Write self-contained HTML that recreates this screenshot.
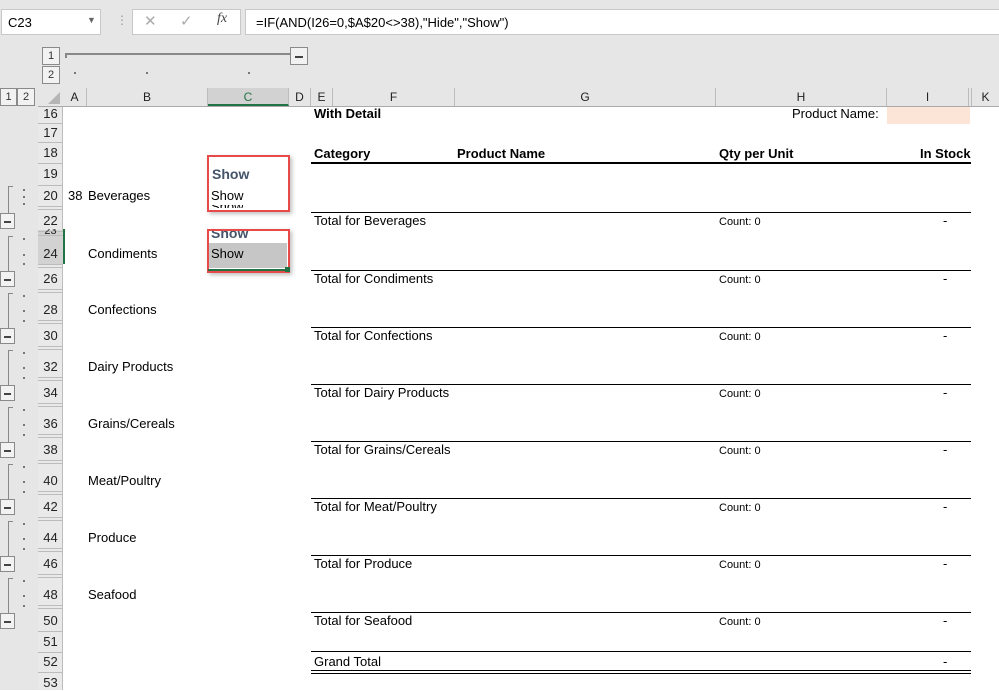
<!DOCTYPE html>
<html><head><meta charset="utf-8"><style>
*{margin:0;padding:0;box-sizing:border-box}
body{width:999px;height:690px;overflow:hidden;background:#fff;font-family:"Liberation Sans",Calibri,sans-serif;position:relative;font-size:13px;color:#000}
.a{position:absolute;white-space:nowrap}
.t{position:absolute;white-space:nowrap;line-height:16px;height:16px}
.rn{position:absolute;left:38px;width:25px;text-align:center;font-size:13px;line-height:16px;color:#222}
.hl{position:absolute;left:38px;width:25px;height:1px;background:#bcbcbc}
.ch{position:absolute;top:88px;height:18px;line-height:18px;text-align:center;font-size:12px;color:#222;border-right:1px solid #bcbcbc}
.btn{position:absolute;border:1px solid #8a8a8a;background:#f2f2f2;font-size:11px;text-align:center;color:#333}
.dot{position:absolute;width:2px;height:2px;background:#777}
.cnt{font-size:11px}
</style></head><body>
<!-- top gray area -->
<div class="a" style="left:0;top:0;width:999px;height:106px;background:#e6e6e6"></div>
<div class="a" style="left:0;top:106px;width:38px;height:584px;background:#e6e6e6"></div>
<div class="a" style="left:38px;top:106px;width:25px;height:584px;background:#e9e9e9;border-right:1px solid #bcbcbc"></div>
<!-- formula bar -->
<div class="a" style="left:1px;top:9px;width:100px;height:26px;background:#fff;border:1px solid #c8c8c8;padding:5px 6px;font-size:13px">C23</div>
<div class="a" style="left:87px;top:15px;font-size:9px;color:#666">▼</div>
<div class="a" style="left:116px;top:13px;color:#999;font-size:12px">⋮</div>
<div class="a" style="left:132px;top:9px;width:109px;height:26px;background:#fff;border:1px solid #c8c8c8"></div>
<div class="a" style="left:144px;top:12px;color:#aaa;font-size:15px">✕</div>
<div class="a" style="left:180px;top:12px;color:#aaa;font-size:15px">✓</div>
<div class="a" style="left:217px;top:11px;color:#444;font-size:14px;font-style:italic;font-family:'Liberation Serif',serif">fx</div>
<div class="a" style="left:245px;top:9px;width:760px;height:26px;background:#fff;border:1px solid #c8c8c8;padding:5px 10px;font-size:13px">=IF(AND(I26=0,$A$20&lt;&gt;38),"Hide","Show")</div>
<!-- column outline -->
<div class="btn" style="left:42px;top:47px;width:18px;height:18px;line-height:16px">1</div>
<div class="btn" style="left:42px;top:66px;width:18px;height:18px;line-height:16px">2</div>
<div class="a" style="left:65px;top:53px;width:226px;height:2px;background:#888"></div>
<div class="a" style="left:65px;top:53px;width:2px;height:5px;background:#888"></div>
<div class="btn" style="left:290px;top:47px;width:18px;height:18px"><div class="a" style="left:4px;top:8px;width:8px;height:2px;background:#444"></div></div>
<div class="dot" style="left:74px;top:72px"></div><div class="dot" style="left:146px;top:72px"></div><div class="dot" style="left:248px;top:72px"></div>
<div class="btn" style="left:0;top:88px;width:17px;height:18px;line-height:16px">1</div>
<div class="btn" style="left:17px;top:88px;width:18px;height:18px;line-height:16px">2</div>
<!-- column headers -->
<div class="a" style="left:38px;top:106px;width:961px;height:1px;background:#aaa"></div>
<div class="a" style="left:48px;top:92px;width:0;height:0;border-left:12px solid transparent;border-bottom:12px solid #b5b5b5"></div>
<div class="ch" style="left:63px;width:24px">A</div>
<div class="ch" style="left:87px;width:121px">B</div>
<div class="ch" style="left:208px;width:81px;background:#d2d2d2;border-bottom:2px solid #217346;color:#217346">C</div>
<div class="ch" style="left:289px;width:22px">D</div>
<div class="ch" style="left:311px;width:22px">E</div>
<div class="ch" style="left:333px;width:122px">F</div>
<div class="ch" style="left:455px;width:261px">G</div>
<div class="ch" style="left:716px;width:171px">H</div>
<div class="ch" style="left:887px;width:82px">I</div>
<div class="ch" style="left:969px;width:3px"></div>
<div class="ch" style="left:972px;width:27px;border-right:0">K</div>
<!-- fixed rows -->
<div class="rn" style="top:106px">16</div><div class="hl" style="top:123px"></div>
<div class="rn" style="top:125px">17</div><div class="hl" style="top:142px"></div>
<div class="rn" style="top:145px">18</div><div class="hl" style="top:163px"></div>
<div class="rn" style="top:166px">19</div><div class="hl" style="top:185px"></div>
<div class="t" style="left:314px;top:106px;font-weight:bold">With Detail</div>
<div class="t" style="left:792px;top:106px">Product Name:</div>
<div class="a" style="left:887px;top:107px;width:83px;height:17px;background:#fce4d6"></div>
<div class="t" style="left:314px;top:146px;font-weight:bold">Category</div>
<div class="t" style="left:457px;top:146px;font-weight:bold">Product Name</div>
<div class="t" style="left:719px;top:146px;font-weight:bold">Qty per Unit</div>
<div class="t" style="left:920px;top:146px;font-weight:bold">In Stock</div>
<div class="a" style="left:311px;top:162px;width:660px;height:2px;background:#000"></div>
<!-- C column boxes -->
<div class="a" style="left:208px;top:243px;width:79px;height:25px;background:#c6c6c6"></div>
<div class="a" style="left:207px;top:155px;width:83px;height:57px;border:2px solid #e84a4a;box-shadow:2px 2px 4px rgba(0,0,0,.25)"></div>
<div class="t" style="left:212px;top:166px;font-weight:bold;font-size:14px;color:#44546a">Show</div>
<div class="t" style="left:211px;top:188px">Show</div>
<div class="a" style="left:211px;top:205px;width:32px;height:3px;overflow:hidden"><div class="t" style="top:-6px">Show</div></div>
<div class="a" style="left:207px;top:229px;width:83px;height:44px;border:2px solid #e84a4a;box-shadow:2px 2px 4px rgba(0,0,0,.25)"></div>
<div class="a" style="left:211px;top:231px;width:45px;height:9px;overflow:hidden"><div class="t" style="top:-6px;font-weight:bold;font-size:14px;color:#44546a">Show</div></div>
<div class="t" style="left:211px;top:246px">Show</div>
<div class="a" style="left:208px;top:269px;width:81px;height:2px;background:#217346"></div>
<div class="a" style="left:285px;top:267px;width:5px;height:5px;background:#217346"></div>
<div class="a" style="left:63px;top:229px;width:2px;height:35px;background:#217346"></div>
<div class="a" style="left:38px;top:230px;width:25px;height:34px;background:#d2d2d2"></div>

<!-- groups -->
<div class="t" style="left:68px;top:188px">38</div>

<!-- group template: Y=center of major row -->
<!-- k0 Y=196 -->
<div class="rn" style="top:188px">20</div><div class="hl" style="top:206px"></div><div class="hl" style="top:209px"></div>
<div class="rn" style="top:213px">22</div><div class="hl" style="top:231px"></div>
<div class="t" style="left:88px;top:188px">Beverages</div>
<div class="a" style="left:311px;top:212px;width:660px;height:1px;background:#000"></div>
<div class="t" style="left:314px;top:213px">Total for Beverages</div>
<div class="t cnt" style="left:719px;top:214px">Count: 0</div><div class="t" style="left:943px;top:213px">-</div>
<div class="a" style="left:8px;top:186px;width:1px;height:28px;background:#888"></div><div class="a" style="left:8px;top:186px;width:5px;height:1px;background:#888"></div>
<div class="dot" style="left:23px;top:189px"></div><div class="dot" style="left:23px;top:196px"></div><div class="dot" style="left:23px;top:203px"></div>
<div class="btn" style="left:0;top:213px;width:15px;height:16px"><div class="a" style="left:3px;top:7px;width:7px;height:2px;background:#444"></div></div>

<!-- k1 Y=254 -->
<div class="rn" style="top:229px;font-size:11px;height:6px;overflow:hidden;line-height:4px">23</div><div class="hl" style="top:235px"></div>
<div class="rn" style="top:246px">24</div><div class="hl" style="top:264px"></div><div class="hl" style="top:267px"></div>
<div class="rn" style="top:271px">26</div><div class="hl" style="top:289px"></div>
<div class="t" style="left:88px;top:246px">Condiments</div>
<div class="a" style="left:311px;top:270px;width:660px;height:1px;background:#000"></div>
<div class="t" style="left:314px;top:271px">Total for Condiments</div>
<div class="t cnt" style="left:719px;top:272px">Count: 0</div><div class="t" style="left:943px;top:271px">-</div>
<div class="a" style="left:8px;top:236px;width:1px;height:36px;background:#888"></div><div class="a" style="left:8px;top:236px;width:5px;height:1px;background:#888"></div>
<div class="dot" style="left:23px;top:238px"></div><div class="dot" style="left:23px;top:254px"></div><div class="dot" style="left:23px;top:263px"></div>
<div class="btn" style="left:0;top:271px;width:15px;height:16px"><div class="a" style="left:3px;top:7px;width:7px;height:2px;background:#444"></div></div>

<!-- k2 Y=310 -->
<div class="hl" style="top:292px"></div>
<div class="rn" style="top:302px">28</div><div class="hl" style="top:320px"></div><div class="hl" style="top:323px"></div>
<div class="rn" style="top:328px">30</div><div class="hl" style="top:346px"></div>
<div class="t" style="left:88px;top:302px">Confections</div>
<div class="a" style="left:311px;top:327px;width:660px;height:1px;background:#000"></div>
<div class="t" style="left:314px;top:328px">Total for Confections</div>
<div class="t cnt" style="left:719px;top:329px">Count: 0</div><div class="t" style="left:943px;top:328px">-</div>
<div class="a" style="left:8px;top:293px;width:1px;height:36px;background:#888"></div><div class="a" style="left:8px;top:293px;width:5px;height:1px;background:#888"></div>
<div class="dot" style="left:23px;top:295px"></div><div class="dot" style="left:23px;top:310px"></div><div class="dot" style="left:23px;top:320px"></div>
<div class="btn" style="left:0;top:328px;width:15px;height:16px"><div class="a" style="left:3px;top:7px;width:7px;height:2px;background:#444"></div></div>

<!-- k3 Y=367 -->
<div class="hl" style="top:349px"></div>
<div class="rn" style="top:359px">32</div><div class="hl" style="top:377px"></div><div class="hl" style="top:380px"></div>
<div class="rn" style="top:385px">34</div><div class="hl" style="top:403px"></div>
<div class="t" style="left:88px;top:359px">Dairy Products</div>
<div class="a" style="left:311px;top:384px;width:660px;height:1px;background:#000"></div>
<div class="t" style="left:314px;top:385px">Total for Dairy Products</div>
<div class="t cnt" style="left:719px;top:386px">Count: 0</div><div class="t" style="left:943px;top:385px">-</div>
<div class="a" style="left:8px;top:350px;width:1px;height:36px;background:#888"></div><div class="a" style="left:8px;top:350px;width:5px;height:1px;background:#888"></div>
<div class="dot" style="left:23px;top:352px"></div><div class="dot" style="left:23px;top:367px"></div><div class="dot" style="left:23px;top:377px"></div>
<div class="btn" style="left:0;top:385px;width:15px;height:16px"><div class="a" style="left:3px;top:7px;width:7px;height:2px;background:#444"></div></div>

<!-- k4 Y=424 -->
<div class="hl" style="top:406px"></div>
<div class="rn" style="top:416px">36</div><div class="hl" style="top:434px"></div><div class="hl" style="top:437px"></div>
<div class="rn" style="top:442px">38</div><div class="hl" style="top:460px"></div>
<div class="t" style="left:88px;top:416px">Grains/Cereals</div>
<div class="a" style="left:311px;top:441px;width:660px;height:1px;background:#000"></div>
<div class="t" style="left:314px;top:442px">Total for Grains/Cereals</div>
<div class="t cnt" style="left:719px;top:443px">Count: 0</div><div class="t" style="left:943px;top:442px">-</div>
<div class="a" style="left:8px;top:407px;width:1px;height:36px;background:#888"></div><div class="a" style="left:8px;top:407px;width:5px;height:1px;background:#888"></div>
<div class="dot" style="left:23px;top:409px"></div><div class="dot" style="left:23px;top:424px"></div><div class="dot" style="left:23px;top:434px"></div>
<div class="btn" style="left:0;top:442px;width:15px;height:16px"><div class="a" style="left:3px;top:7px;width:7px;height:2px;background:#444"></div></div>

<!-- k5 Y=481 -->
<div class="hl" style="top:463px"></div>
<div class="rn" style="top:473px">40</div><div class="hl" style="top:491px"></div><div class="hl" style="top:494px"></div>
<div class="rn" style="top:499px">42</div><div class="hl" style="top:517px"></div>
<div class="t" style="left:88px;top:473px">Meat/Poultry</div>
<div class="a" style="left:311px;top:498px;width:660px;height:1px;background:#000"></div>
<div class="t" style="left:314px;top:499px">Total for Meat/Poultry</div>
<div class="t cnt" style="left:719px;top:500px">Count: 0</div><div class="t" style="left:943px;top:499px">-</div>
<div class="a" style="left:8px;top:464px;width:1px;height:36px;background:#888"></div><div class="a" style="left:8px;top:464px;width:5px;height:1px;background:#888"></div>
<div class="dot" style="left:23px;top:466px"></div><div class="dot" style="left:23px;top:481px"></div><div class="dot" style="left:23px;top:491px"></div>
<div class="btn" style="left:0;top:499px;width:15px;height:16px"><div class="a" style="left:3px;top:7px;width:7px;height:2px;background:#444"></div></div>

<!-- k6 Y=538 -->
<div class="hl" style="top:520px"></div>
<div class="rn" style="top:530px">44</div><div class="hl" style="top:548px"></div><div class="hl" style="top:551px"></div>
<div class="rn" style="top:556px">46</div><div class="hl" style="top:574px"></div>
<div class="t" style="left:88px;top:530px">Produce</div>
<div class="a" style="left:311px;top:555px;width:660px;height:1px;background:#000"></div>
<div class="t" style="left:314px;top:556px">Total for Produce</div>
<div class="t cnt" style="left:719px;top:557px">Count: 0</div><div class="t" style="left:943px;top:556px">-</div>
<div class="a" style="left:8px;top:521px;width:1px;height:36px;background:#888"></div><div class="a" style="left:8px;top:521px;width:5px;height:1px;background:#888"></div>
<div class="dot" style="left:23px;top:523px"></div><div class="dot" style="left:23px;top:538px"></div><div class="dot" style="left:23px;top:548px"></div>
<div class="btn" style="left:0;top:556px;width:15px;height:16px"><div class="a" style="left:3px;top:7px;width:7px;height:2px;background:#444"></div></div>

<!-- k7 Y=595 -->
<div class="hl" style="top:577px"></div>
<div class="rn" style="top:587px">48</div><div class="hl" style="top:605px"></div><div class="hl" style="top:608px"></div>
<div class="rn" style="top:613px">50</div><div class="hl" style="top:631px"></div>
<div class="t" style="left:88px;top:587px">Seafood</div>
<div class="a" style="left:311px;top:612px;width:660px;height:1px;background:#000"></div>
<div class="t" style="left:314px;top:613px">Total for Seafood</div>
<div class="t cnt" style="left:719px;top:614px">Count: 0</div><div class="t" style="left:943px;top:613px">-</div>
<div class="a" style="left:8px;top:578px;width:1px;height:36px;background:#888"></div><div class="a" style="left:8px;top:578px;width:5px;height:1px;background:#888"></div>
<div class="dot" style="left:23px;top:580px"></div><div class="dot" style="left:23px;top:595px"></div><div class="dot" style="left:23px;top:605px"></div>
<div class="btn" style="left:0;top:613px;width:15px;height:16px"><div class="a" style="left:3px;top:7px;width:7px;height:2px;background:#444"></div></div>

<!-- tail -->
<div class="rn" style="top:634px">51</div><div class="hl" style="top:652px"></div>
<div class="rn" style="top:654px">52</div><div class="hl" style="top:672px"></div>
<div class="rn" style="top:675px">53</div>
<div class="a" style="left:311px;top:651px;width:660px;height:1px;background:#000"></div>
<div class="t" style="left:314px;top:654px">Grand Total</div>
<div class="t" style="left:943px;top:654px">-</div>
<div class="a" style="left:311px;top:670px;width:660px;height:1px;background:#000"></div>
<div class="a" style="left:311px;top:673px;width:660px;height:1px;background:#000"></div>
</body></html>
